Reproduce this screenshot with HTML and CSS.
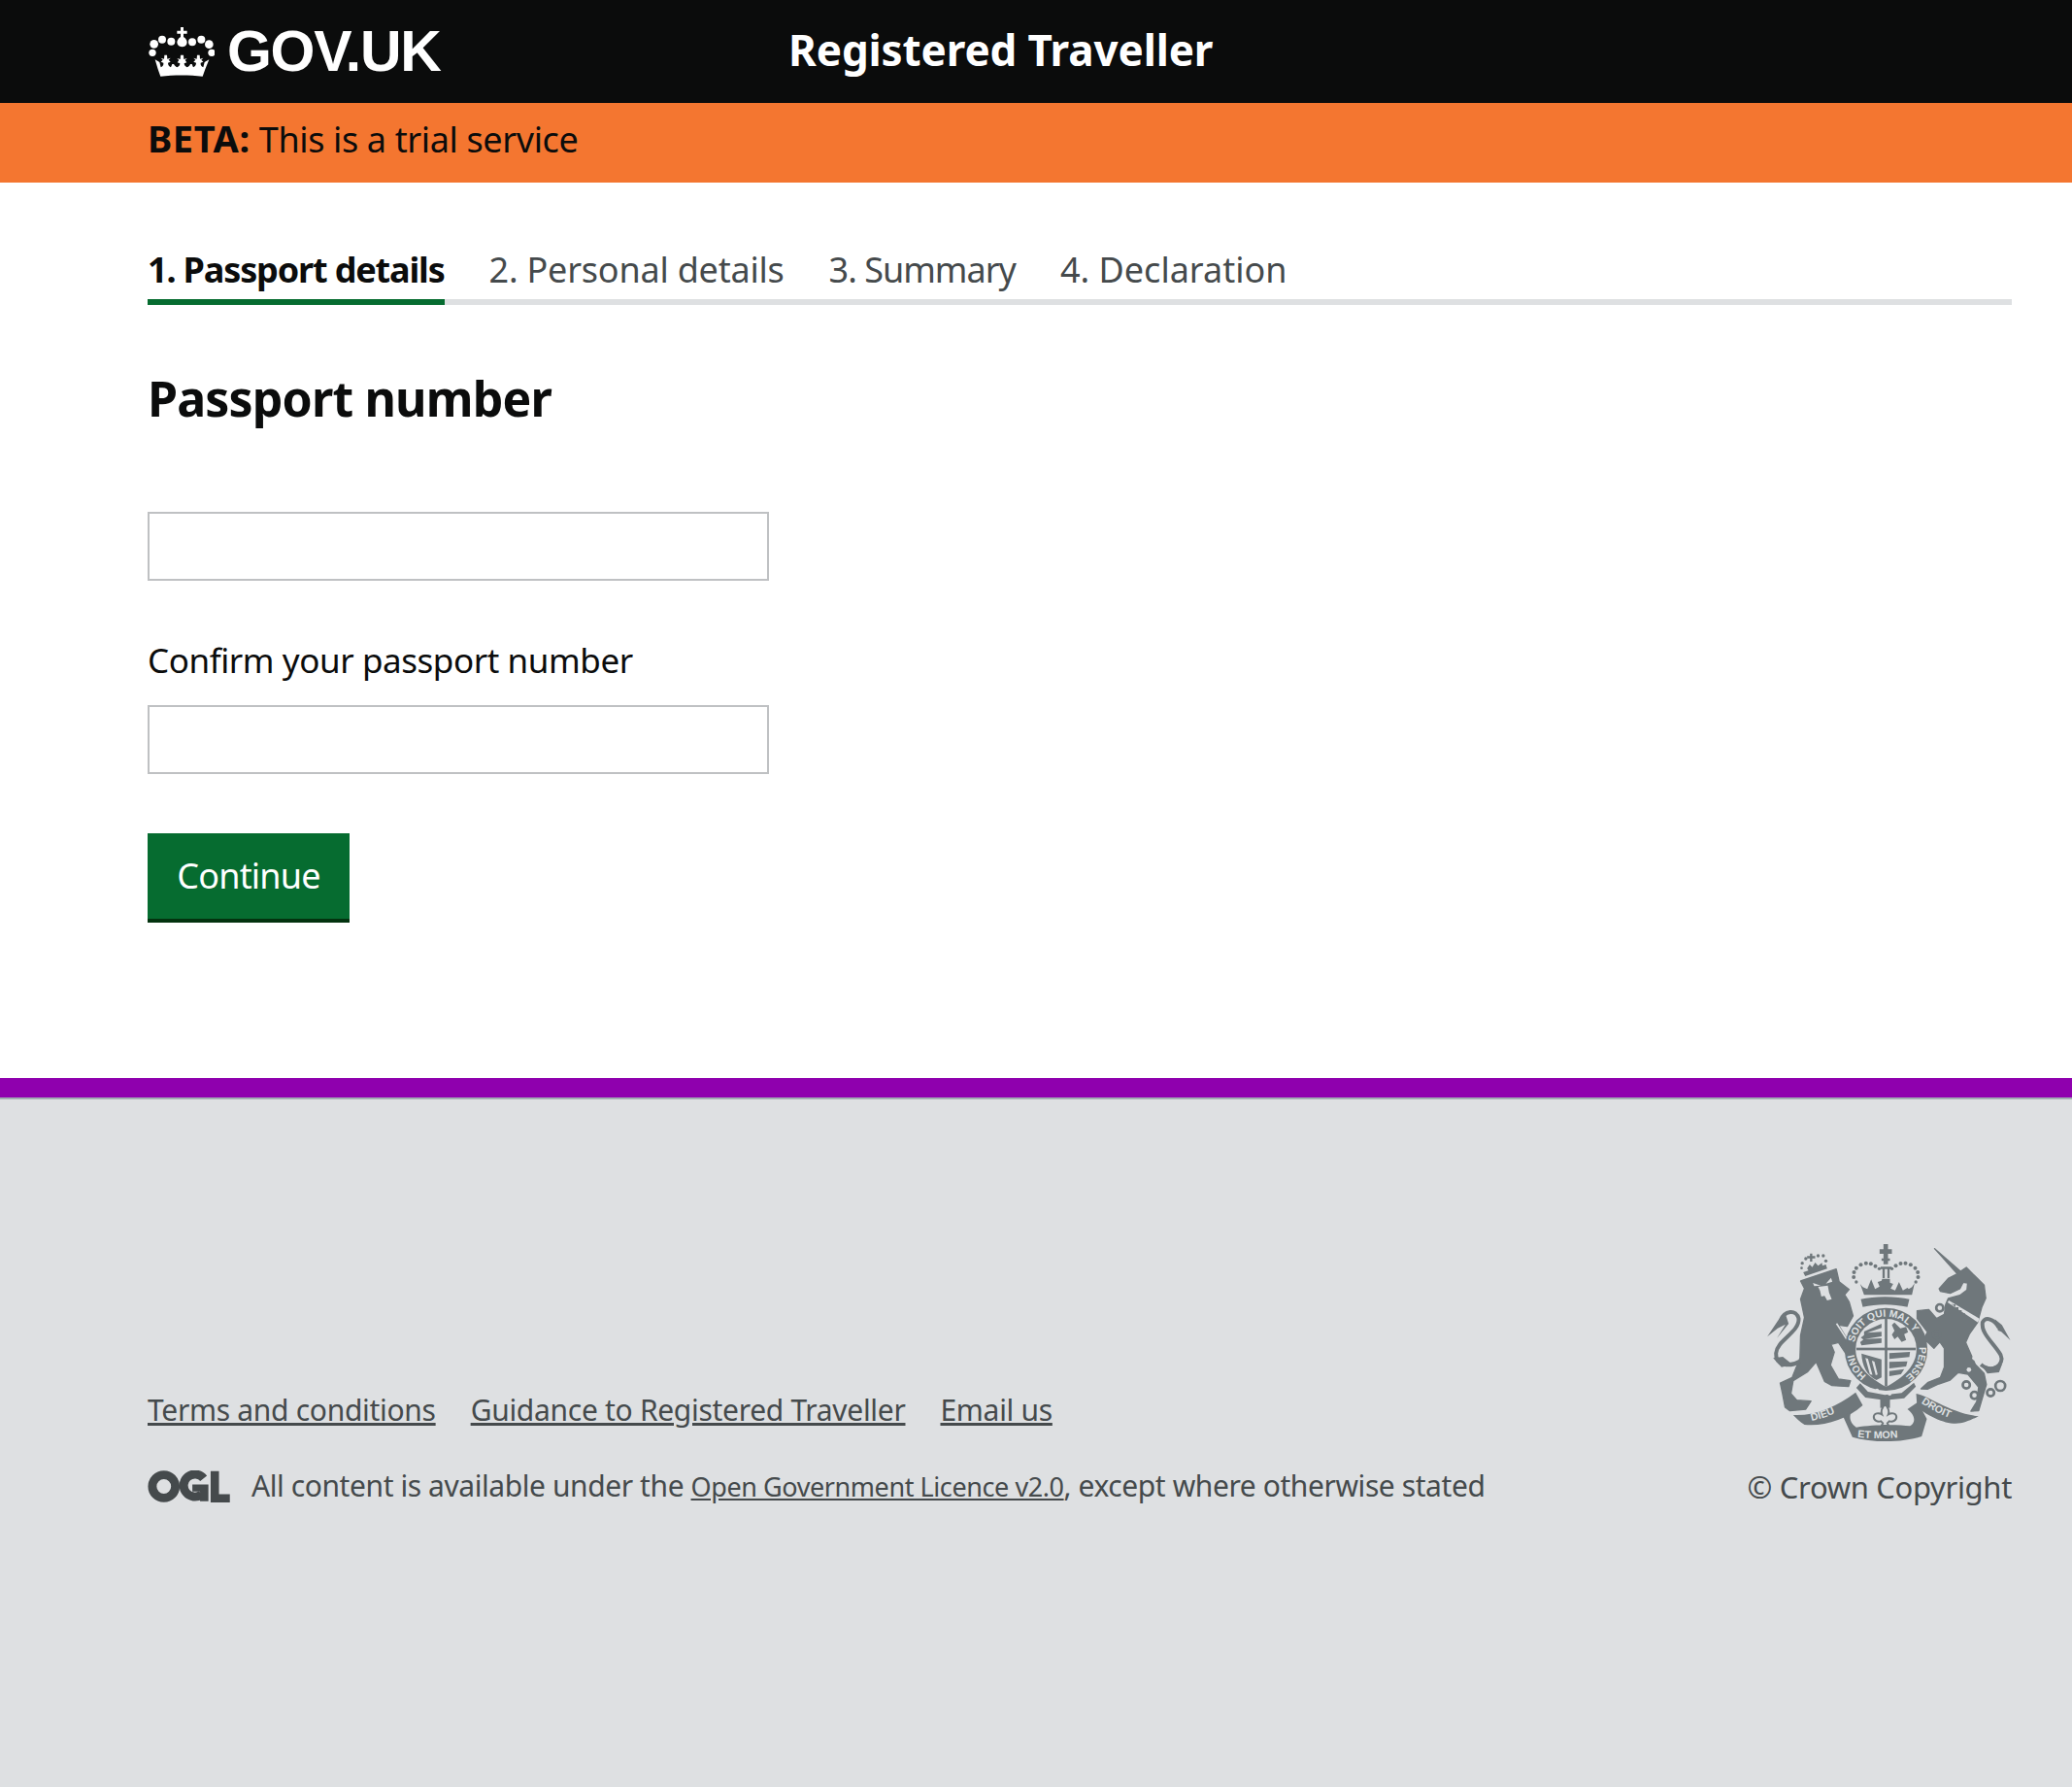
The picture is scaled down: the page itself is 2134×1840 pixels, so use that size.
FILE: index.html
```html
<!DOCTYPE html>
<html lang="en">
<head>
<meta charset="utf-8">
<title>Registered Traveller</title>
<link rel="stylesheet" href="styles.css">
</head>
<body>
<header class="site-header">
  <a class="logo" href="#">
    <svg class="crown" viewBox="68 78 204 153" aria-hidden="true">
      <g fill="#fff">
        <path d="M167 78h9v11h11v9h-11v10c9 6 13 14 10 22-2 6-8 9-14 9s-13-3-15-9c-3-8 1-16 10-22V98h-11v-9h11z"/>
        <circle cx="85" cy="130" r="13"/><circle cx="138" cy="122" r="12"/><circle cx="203" cy="124" r="12"/><circle cx="231" cy="116" r="12"/><circle cx="110" cy="116" r="12"/><circle cx="255" cy="131" r="13"/>
        <circle cx="80" cy="157" r="11"/><circle cx="263" cy="157" r="11"/>
        <path d="M88 178l14 8 4 16c6-3 9-8 8-14l-8-3 6-6-6-6 10 3 1-12h8l1 12 10-3-6 6 6 6-8 3c0 6 3 11 9 14l4-10 5 0c3 5 6 8 10 10 6-2 9-6 9-12l-8-3 5-7-6-6 10 3 1-13h9l1 13 10-3-6 6 5 7-8 3c0 6 4 10 9 12 5-2 8-5 10-10h5l4 10c6-3 9-8 9-14l-8-3 6-6-6-6 10 3 1-12h8l1 12 10-3-6 6 6 6-8 3c-1 6 2 11 8 14l4-16 14-8-12 30-8 22c-40-5-90-5-130 0l-8-22z"/>
      </g>
    </svg>
    <span class="logo-text">GOV.UK</span>
  </a>
  <a class="service-name" href="#">Registered Traveller</a>
</header>

<div class="phase-banner"><strong class="phase-tag">BETA:</strong> This is a trial service</div>

<main class="main">
  <nav class="steps">
    <span class="step step-active">1. Passport details</span>
    <span class="step step-two">2. Personal details</span>
    <span class="step step-three">3. Summary</span>
    <span class="step step-four">4. Declaration</span>
  </nav>
  <h1 class="title">Passport number</h1>
  <form class="form">
    <input class="field" type="text" aria-label="Passport number">
    <label class="label" for="confirm">Confirm your passport number</label>
    <input class="field" id="confirm" type="text">
    <button class="button" type="button">Continue</button>
  </form>
</main>

<footer class="footer">
  <div class="footer-left">
    <ul class="footer-links">
      <li><a href="#">Terms and conditions</a></li>
      <li><a href="#">Guidance to Registered Traveller</a></li>
      <li><a href="#">Email us</a></li>
    </ul>
    <div class="licence">
      <svg class="ogl" viewBox="66 300 256 100" aria-hidden="true">
        <g fill="none" stroke="#454a4c" stroke-width="27">
          <circle cx="116" cy="350" r="36"/>
          <path d="M240 325a35 35 0 1 0 -6 50"/>
        </g>
        <path fill="#454a4c" d="M205 344h50v52h-26v-30h-24zM262 302h26v72h34v26h-60z"/>
      </svg>
      <p class="licence-text">All content is available under the <a class="licence-link" href="#">Open Government Licence v2.0</a>, except where otherwise stated</p>
    </div>
  </div>
  <div class="footer-right">
    <svg class="crest" viewBox="125 65 755 615" role="img" aria-label="Royal coat of arms">
      <defs>
        <path id="garter-top" d="M394 372A100 100 0 0 1 590 372"/>
        <path id="garter-tail" d="M594 386A102 102 0 0 1 528 490"/>
        <path id="garter-left" d="M432 474A100 100 0 0 1 392 396"/>
        <path id="scroll-left" d="M262 614C300 606 345 590 385 558"/>
        <path id="scroll-mid" d="M404 664C450 670 530 670 582 658"/>
        <path id="scroll-right" d="M600 558C640 586 680 604 724 618"/>
      </defs>
      <g class="crest-ink">
        <!-- lion crown -->
        <path d="M257 97h7v8h9v7h-9v10h-7v-10h-9v-7h9z"/>
        <circle cx="233" cy="127" r="5"/><circle cx="244" cy="113" r="5"/><circle cx="282" cy="104" r="5"/><circle cx="298" cy="104" r="5"/><circle cx="306" cy="120" r="5"/><circle cx="231" cy="142" r="4"/>
        <path d="M236 155l70-24 4 13-68 23z"/>
        <path d="M248 143l8-12 8 8 9-14 9 10 12-9 2 13-42 13z"/>
        <!-- lion -->
        <path class="soft" d="M228 182L338 145 347 184 378 208 364 224 378 247 390 290 372 322 345 318 382 378 394 408 388 420 374 416 345 372 322 378 332 402 320 442 345 485 382 490 376 508 325 505 302 492 276 432 250 462 205 490 198 530 216 550 260 553 244 578 195 583 180 572 172 530 165 497 202 480 226 420 228 350 240 295 228 238 240 205Z"/>
        <!-- unicorn -->
        <path class="soft" d="M642 82L722 152 740 140 768 168 795 195 800 235 788 262 775 310 750 345 738 372 768 440 795 468 802 502 795 525 778 583 754 584 772 555 778 510 745 470 715 465 690 488 655 500 620 516 600 515 622 495 660 480 672 448 672 390 658 370 640 390 620 370 606 365 620 340 588 298 588 274 624 270 648 298 672 285 676 255 684 236 720 226 742 210 744 188 730 186 720 206 690 220 660 214 656 206 684 174 712 160Z"/>
      </g>
      <g class="crest-paper">
        <path d="M266 188l24 8-20 2zM322 172l4 12-20 6zM282 200l30-4 4 22 8 20-14 4-8-14-10 2-4-18z"/>
        <path d="M337 315l4-3 34 52-4 3z"/>
        <path d="M682 248l4-6 94 56-4 12z"/>
        <circle cx="765" cy="420" r="7"/><circle cx="748" cy="456" r="7"/><circle cx="780" cy="378" r="10"/>
      </g>
      <g class="crest-ink">
        <path d="M694 252l3 6 9-3 0 10 10 0-1 10 11-1-2 11 12-2-2 9-4 0z" transform="translate(0 -2)"/>
        <!-- garter ring -->
        <circle cx="492" cy="393" r="128"/>
        <!-- heraldic crown -->
        <path d="M484 68h14v16h12v14h-12v14h6v8h-6v10h-14v-10h-6v-8h6V98h-12V84h12z"/>
        <path d="M481 145h7v28h-7zM496 145h7v28h-7zM475 138h34v7h-34z"/>
        <path d="M480 175h24l0 12 10 4-8 14 14 6 12-26 12 26 14-8 4 4 10-6 8-12-8 36H424l-12-34 8 10 14 6 12-30 12 30 14-8-6-14 12-4z"/>
        <path d="M414 238c40-10 110-10 150 0l-6 24c-45-10-95-10-138 0z"/>
        <circle cx="392" cy="170" r="6"/><circle cx="393" cy="155" r="6"/><circle cx="400" cy="142" r="6"/><circle cx="414" cy="132" r="6"/><circle cx="430" cy="127" r="6"/><circle cx="445" cy="129" r="6"/><circle cx="459" cy="136" r="6"/><circle cx="471" cy="144" r="5"/><circle cx="510" cy="144" r="5"/><circle cx="522" cy="135" r="6"/><circle cx="537" cy="128" r="6"/><circle cx="552" cy="127" r="6"/><circle cx="568" cy="132" r="6"/><circle cx="582" cy="142" r="6"/><circle cx="590" cy="155" r="6"/><circle cx="591" cy="170" r="6"/><circle cx="400" cy="185" r="5"/><circle cx="584" cy="185" r="5"/>
      </g>
      <!-- shield -->
      <path class="crest-paper" d="M398 393a94 94 0 0 1 188 0c0 50-40 88-94 116-54-28-94-66-94-116z"/>
      <text class="crest-text"><textPath href="#garter-top">SOIT QUI MAL Y</textPath></text>
      <text class="crest-text"><textPath href="#garter-tail">PENSE</textPath></text>
      <text class="crest-text"><textPath href="#garter-left">HONI</textPath></text>
      <g class="crest-ink">
        <rect x="488" y="298" width="8" height="210"/>
        <rect x="400" y="388" width="184" height="8"/>
        <!-- quarters -->
        <path d="M424 338l54-24v13l-44 15 44-3v14l-52 8 52-2v14l-62 8-4-10 10-8-8-6 10-8z"/>
        <path d="M510 318l8-8 18 18 18-4 6 16-12 6 6 18-14 6-12-16-10 8-8-14 8-12z"/>
        <path d="M416 406l62 18 0 56-16 8c-30-16-44-44-46-82z"/>
        <path d="M502 405l64-4-2 16-62 6zM502 432l56-2-4 16-52 6zM502 460l46-6-10 16-36 6z"/>
      </g>
      <path class="crest-paper" d="M428 420l8 2 14 50-8-2zM448 428l8 3 10 40-6 2z"/>
      <!-- garter strap -->
      <path class="crest-ink" d="M412 498l24 26 52 10 52-6 38-32 6 12-36 36-60 6-60-8-28-30z"/>
      <circle class="crest-paper" cx="464" cy="520" r="6"/><circle class="crest-paper" cx="503" cy="530" r="6"/>
      <!-- motto scroll -->
      <g class="crest-ink">
        <path d="M205 596C270 600 340 570 398 526L420 566C370 610 300 632 240 626 224 616 215 606 205 596Z"/>
        <path d="M360 602L398 570C372 592 378 620 400 634 450 625 530 625 566 630 590 615 575 590 558 578L590 556 618 608 602 662C540 682 450 682 388 664Z"/>
        <path d="M585 530C620 535 690 590 778 600 752 612 730 624 700 622 660 620 610 590 588 572Z"/>
        <path d="M474 548h30v26h-30z"/>
      </g>
      <path class="fleur" d="M489 562c10 12 14 22 10 32 10-6 24-4 25 7 1 11-12 18-22 14l-6 6 4 8h-22l4-8-6-6c-10 4-23-3-22-14 1-11 15-13 25-7-4-10 0-20 10-32z"/>
      <text class="scroll-text"><textPath href="#scroll-left">DIEU</textPath></text>
      <text class="scroll-text"><textPath href="#scroll-mid">ET MON</textPath></text>
      <text class="scroll-text"><textPath href="#scroll-right">DROIT</textPath></text>
      <!-- chain, tails -->
      <g class="crest-line">
        <circle cx="658" cy="265" r="11"/><circle cx="648" cy="348" r="11"/><circle cx="740" cy="503" r="11"/><circle cx="765" cy="535" r="11"/><circle cx="815" cy="527" r="11"/><circle cx="845" cy="506" r="15"/>
        <path class="tail" d="M785 440C820 470 860 440 846 410 826 375 785 345 790 310 800 290 826 300 840 325"/>
        <path class="tail" d="M225 430C195 448 150 445 152 405 155 365 225 340 222 298 215 268 178 272 165 305"/>
      </g>
      <g class="crest-ink">
        <path d="M828 300l22 18 26 47-28-26-10-4z"/>
        <path d="M180 280l-22 24-33 50 32-26 24-12-26 42 36-44z"/>
        <path d="M143 420l30-4 30 24-34 8z"/>
        <path d="M785 440l30 8 36-10-10 26-36 4z"/>
      </g>
    </svg>
    <p class="copyright">© Crown Copyright</p>
  </div>
</footer>
</body>
</html>
```
FILE: styles.css
```css
* { box-sizing: border-box; }

html, body { margin: 0; padding: 0; }

body {
  min-height: 1840px;
  display: flex;
  flex-direction: column;
  font-family: "Noto Sans", "Liberation Sans", sans-serif;
  color: #0b0c0c;
  background: #fff;
}

a { color: inherit; }

.site-header {
  height: 106px;
  background: #0b0c0c;
  color: #fff;
  display: flex;
  align-items: center;
  padding-left: 153px;
}

.logo {
  display: flex;
  align-items: center;
  gap: 13px;
  width: 659px;
  text-decoration: none;
}

.crown { width: 68px; height: 51px; flex: none; }

.logo-text {
  font: 700 59px/1 "Liberation Sans", Arial, sans-serif;
  letter-spacing: -1.3px;
}

.service-name {
  font-size: 44px;
  font-weight: 700;
  letter-spacing: -0.12px;
  text-decoration: none;
  padding-bottom: 4px;
}

.phase-banner {
  height: 82px;
  background: #f47630;
  padding-left: 152px;
  font-size: 36px;
  line-height: 73px;
  letter-spacing: -0.37px;
}

.phase-tag {
  font-size: 38px;
  letter-spacing: 0.6px;
}

.main {
  height: 922px;
  padding: 68px 62px 0 152px;
}

.steps {
  display: flex;
  gap: 46px;
  border-bottom: 6px solid #dee0e2;
  font-size: 36px;
  line-height: 44px;
  color: #454a4c;
}

.step {
  padding-bottom: 8px;
  margin-bottom: -6px;
  border-bottom: 6px solid transparent;
}

.step-active {
  font-weight: 700;
  letter-spacing: -1.15px;
  color: #0b0c0c;
  border-bottom-color: #066c30;
}

.step-two { letter-spacing: -0.22px; }
.step-three { letter-spacing: -1px; }

.title {
  margin: 61px 0 0;
  font-size: 50px;
  line-height: 70px;
  font-weight: 700;
  letter-spacing: -0.85px;
}

.form {
  display: flex;
  flex-direction: column;
  align-items: flex-start;
  padding-top: 82px;
}

.field {
  width: 640px;
  height: 71px;
  border: 2px solid #bfc1c3;
  background: #fff;
  padding: 0;
}

.label {
  margin: 56px 0 20px;
  font-size: 35px;
  line-height: 52px;
  letter-spacing: -0.43px;
}

.button {
  width: 208px;
  height: 92px;
  margin-top: 61px;
  border: 0;
  border-bottom: 4px solid #03330f;
  background: #066c30;
  color: #fff;
  font: inherit;
  font-size: 36px;
  letter-spacing: -0.8px;
  padding: 0 0 2px;
}

.footer {
  flex: 1;
  display: flex;
  justify-content: space-between;
  padding: 150px 62px 0 152px;
  border-top: 20px solid #8f00ae;
  background: #dee0e2;
  color: #454a4c;
  font-size: 30px;
  letter-spacing: -0.3px;
  box-shadow: inset 0 2px 0 #a1acb2;
}

.footer-left { padding-top: 150px; }

.footer-links {
  display: flex;
  gap: 36px;
  list-style: none;
  margin: 0;
  padding: 0;
  line-height: 44px;
}

.licence {
  display: flex;
  align-items: center;
  gap: 22px;
  margin-top: 34px;
}

.ogl { width: 85px; height: 33px; flex: none; }

.licence-text {
  margin: 0;
  line-height: 44px;
  letter-spacing: -0.42px;
  white-space: nowrap;
}

.licence-link { font-size: 27px; }

.footer-right {
  display: flex;
  flex-direction: column;
  align-items: flex-end;
}

.crest { width: 252px; height: 205px; display: block; }

.crest-ink { fill: #6f777b; }

.crest-paper { fill: #dee0e2; }

.soft {
  stroke: #6f777b;
  stroke-width: 4;
  stroke-linejoin: round;
}

.crest-line {
  fill: none;
  stroke: #6f777b;
  stroke-width: 8;
}

.tail { stroke-width: 12; }

.fleur {
  fill: #dee0e2;
  stroke: #6f777b;
  stroke-width: 6;
}

.copyright {
  margin: 24px 0 0;
  font-size: 31px;
  line-height: 44px;
  letter-spacing: -0.34px;
}

.crest-text {
  font: 700 31px "Liberation Sans", Arial, sans-serif;
  letter-spacing: 0;
  fill: #dee0e2;
}

.scroll-text {
  font: 700 32px "Liberation Sans", Arial, sans-serif;
  letter-spacing: 0;
  fill: #dee0e2;
}
```
